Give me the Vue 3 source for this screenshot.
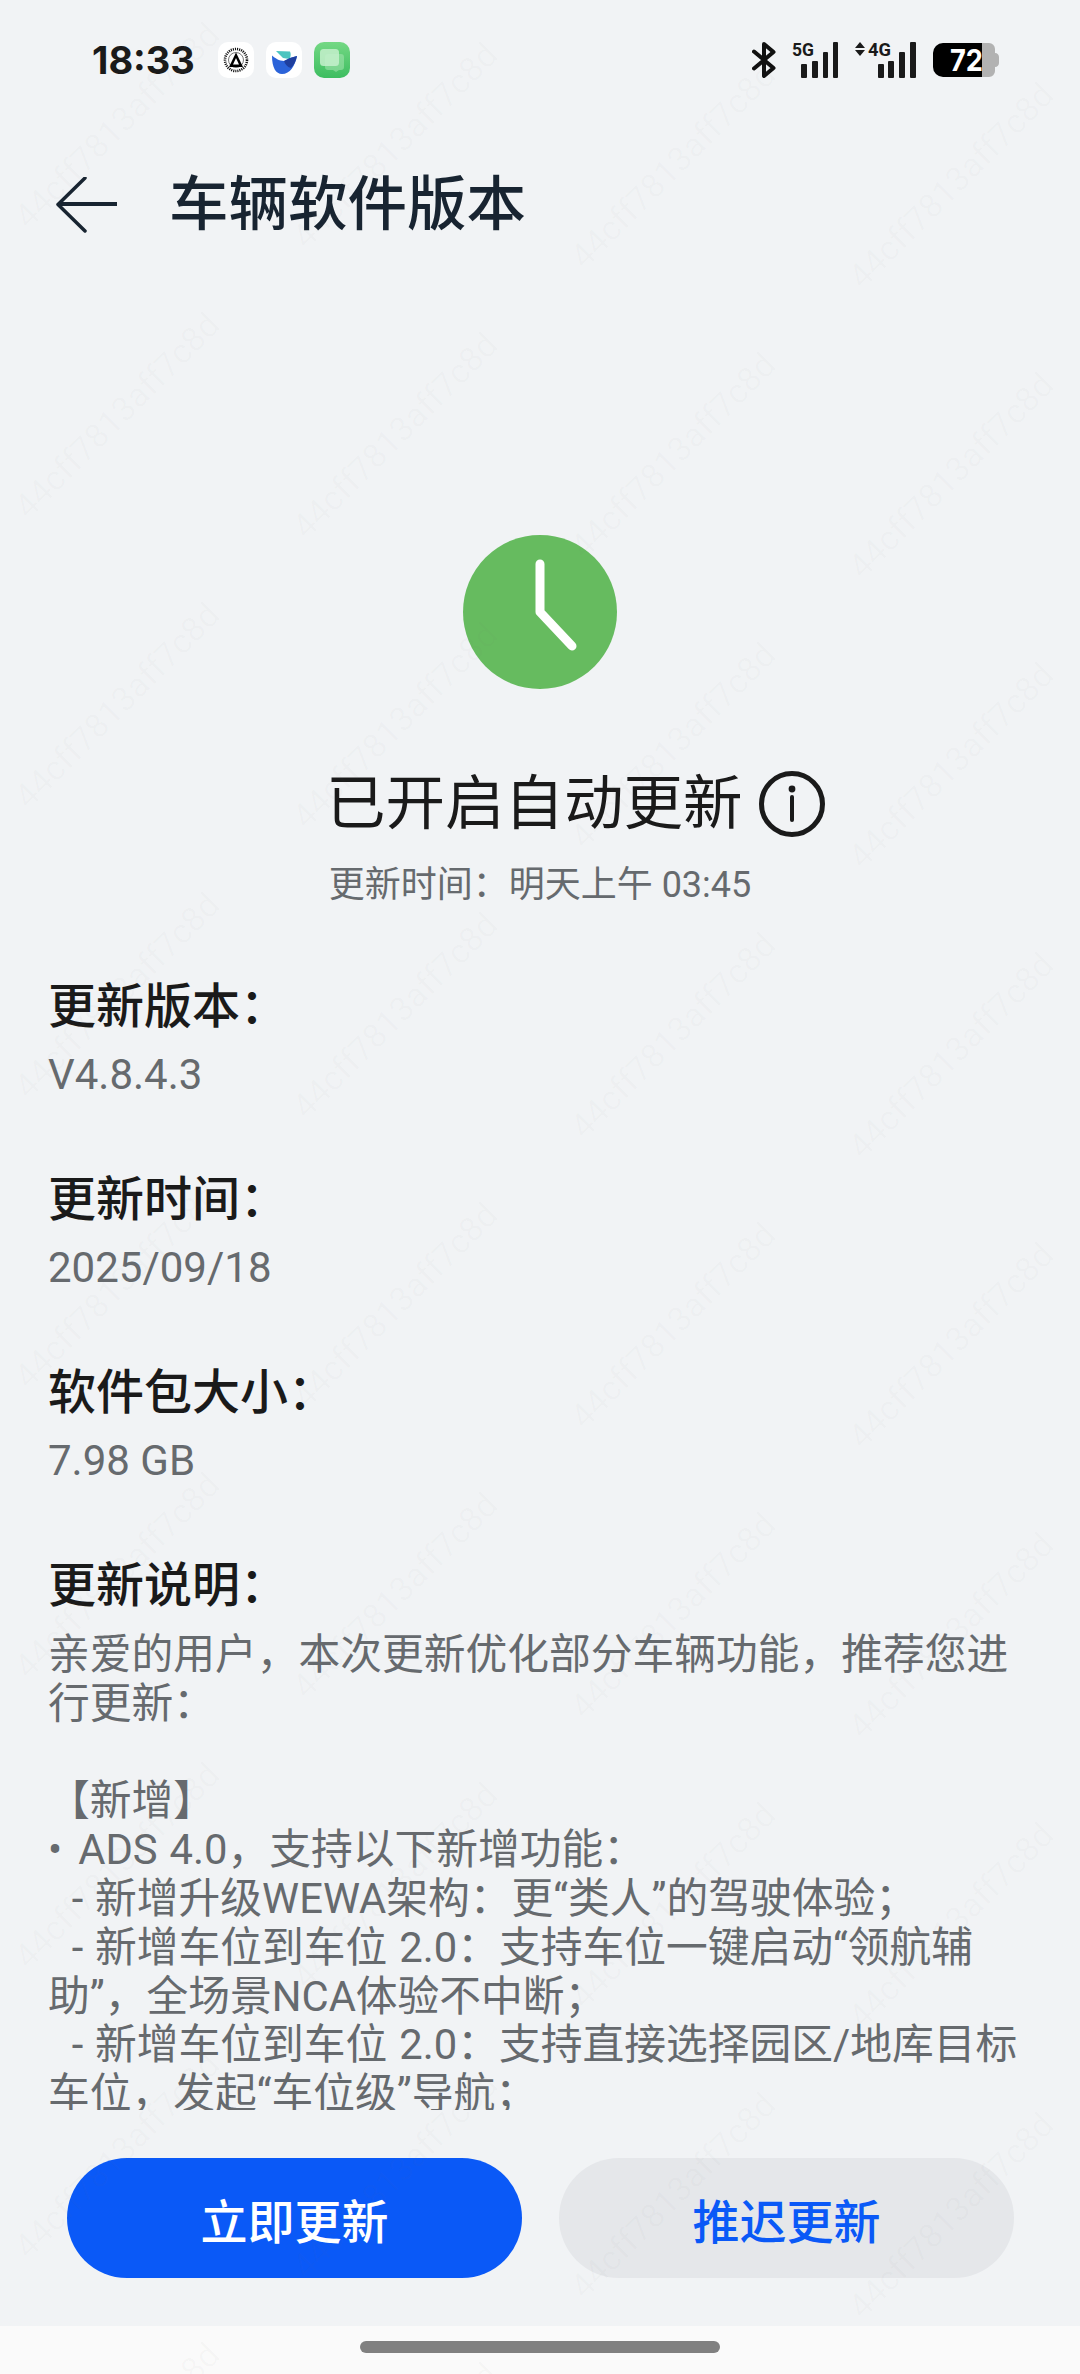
<script setup>
const infos = [
  { label: '更新版本：', value: 'V4.8.4.3' },
  { label: '更新时间：', value: '2025/09/18' },
  { label: '软件包大小：', value: '7.98 GB' },
]
const notes = `亲爱的用户，本次更新优化部分车辆功能，推荐您进行更新：

【新增】
•\u200a ADS 4.0，支持以下新增功能：
  - 新增升级WEWA架构：更“类人”的驾驶体验；
  - 新增车位到车位 2.0：支持车位一键启动“领航辅助”，全场景NCA体验不中断；
  - 新增车位到车位 2.0：支持直接选择园区/地库目标车位，发起“车位级”导航；`
const marks = []
for (let r = -1; r < 8; r++) {
  for (let c = 0; c < 4; c++) {
    marks.push({ left: 20 + 278 * c, top: 495 + 290 * r + 20 * c })
  }
}
</script>

<template>
  <div class="page">
    <div class="status">
      <div class="status-left">
        <span class="time">18:33</span>
        <div class="apps">
          <svg class="app" viewBox="0 0 36 36">
            <rect width="36" height="36" rx="10" fill="#fff" />
            <circle cx="18" cy="18" r="11" fill="none" stroke="#111" stroke-width="2.6" stroke-dasharray="1.1 1" />
            <circle cx="18" cy="18" r="7.5" fill="none" stroke="#555" stroke-width="0.8" />
            <path d="M18 10.5L25 25H11Z" fill="#000" />
            <path d="M18 16L21 22.5H15Z" fill="#fff" />
          </svg>
          <svg class="app" viewBox="0 0 36 36">
            <rect width="36" height="36" rx="10" fill="#fff" />
            <path d="M10 9L24 9.5C25 12 25 14 23.5 17L17 16Z" fill="#4cc4c0" />
            <path d="M6 13.5C9 16 13 19 18 19L24 16L31 14C29 24 24 32 16 32C10 32 6 26 6 13.5Z" fill="#2b63d9" />
            <path d="M18 19L24 16L31 14C30 19 28 23 25 26C21 25 19 22 18 19Z" fill="#1f3f9e" />
          </svg>
          <svg class="app" viewBox="0 0 36 36">
            <defs>
              <linearGradient id="chatGreen" x1="0" y1="0" x2="0" y2="1">
                <stop offset="0" stop-color="#74d884" />
                <stop offset="1" stop-color="#3dbd60" />
              </linearGradient>
            </defs>
            <rect width="36" height="36" rx="10" fill="url(#chatGreen)" />
            <path d="M14 12h13a3 3 0 0 1 3 3v10a3 3 0 0 1-3 3h-2l-3 2-3-2h-5a3 3 0 0 1-3-3V15a3 3 0 0 1 3-3Z" fill="#a7e6b2" opacity=".55" />
            <rect x="6" y="7" width="19" height="17" rx="3.5" fill="#c5f0cc" opacity=".85" />
          </svg>
        </div>
      </div>
      <div class="status-right">
        <svg class="bt" viewBox="0 0 24 36">
          <path d="M2 9.500L21.500 26L12 34V2L21.500 10L2 26.500" fill="none" stroke="#111" stroke-width="4" stroke-linejoin="round" stroke-linecap="round" />
        </svg>
        <svg class="sig5" viewBox="0 0 47 36">
          <text class="net" x="0" y="14" textLength="22" lengthAdjust="spacingAndGlyphs">5G</text>
          <rect x="9" y="22" width="6" height="14" rx="1" fill="#1a1a1a" />
          <rect x="20" y="19" width="6" height="17" rx="1" fill="#1a1a1a" />
          <rect x="31" y="10" width="5" height="26" rx="1" fill="#1a1a1a" />
          <rect x="41" y="0" width="5" height="36" rx="1" fill="#1a1a1a" />
        </svg>
        <svg class="sig4" viewBox="0 0 62 36">
          <path d="M5 0L10 6H0ZM5 14L0 8H10Z" fill="#1a1a1a" />
          <text class="net" x="13" y="14" textLength="23" lengthAdjust="spacingAndGlyphs">4G</text>
          <rect x="23" y="22" width="6" height="14" rx="1" fill="#1a1a1a" />
          <rect x="33" y="19" width="6" height="17" rx="1" fill="#1a1a1a" />
          <rect x="44" y="10" width="6" height="26" rx="1" fill="#1a1a1a" />
          <rect x="55" y="0" width="6" height="36" rx="1" fill="#1a1a1a" />
        </svg>
        <svg class="battery" viewBox="0 0 66 34">
          <path d="M10 0H49V34H10A10 10 0 0 1 0 24V10A10 10 0 0 1 10 0Z" fill="#000" />
          <path d="M49 0H56A6 6 0 0 1 62 6V10C64.500 10 66 12 66 14V20C66 22 64.500 24 62 24V28A6 6 0 0 1 56 34H49Z" fill="#b2b2b2" />
          <text class="batt" x="17" y="28" textLength="33" lengthAdjust="spacingAndGlyphs">72</text>
        </svg>
      </div>
    </div>

    <header class="bar">
      <svg class="back" viewBox="0 0 62 56">
        <path d="M61 27H3" stroke="#182431" stroke-width="4" fill="none" />
        <path d="M29 1L2 27.500L29 54" stroke="#182431" stroke-width="3.500" fill="none" stroke-linecap="round" stroke-linejoin="round" />
      </svg>
      <h1 class="title">车辆软件版本</h1>
    </header>

    <main class="scroll">
      <section class="hero">
        <svg class="clock" viewBox="0 0 154 154">
          <circle cx="77" cy="77" r="77" fill="#66bb5f" />
          <path d="M77 29V77L109 111" fill="none" stroke="#fff" stroke-width="9" stroke-linecap="round" stroke-linejoin="round" />
        </svg>
        <div class="hero-title">
          <span>已开启自动更新</span>
          <svg class="info" viewBox="0 0 66 66">
            <circle cx="33" cy="33" r="30.500" fill="none" stroke="#1a1a1a" stroke-width="5" />
            <circle cx="33" cy="18" r="3.400" fill="#1a1a1a" />
            <path d="M33 26V49" stroke="#1a1a1a" stroke-width="4" stroke-linecap="round" />
          </svg>
        </div>
        <p class="hero-sub">更新时间：明天上午 03:45</p>
      </section>

      <section class="details">
        <div v-for="item in infos" :key="item.label" class="row">
          <h2 class="label">{{ item.label }}</h2>
          <p class="value">{{ item.value }}</p>
        </div>
        <div class="row">
          <h2 class="label">更新说明：</h2>
          <p class="notes">{{ notes }}</p>
        </div>
      </section>
    </main>

    <footer class="actions">
      <button class="btn primary">立即更新</button>
      <button class="btn secondary">推迟更新</button>
    </footer>

    <div class="nav"><span class="pill"></span></div>

    <div class="marks">
      <span v-for="(m, i) in marks" :key="i" class="mark" :style="{ left: m.left + 'px', top: m.top + 'px' }">44cff7813aff7c8d</span>
    </div>
  </div>
</template>

<style>
html, body { margin: 0; padding: 0; background: #f1f3f5; }
</style>

<style scoped>
.page {
  position: relative;
  width: 1080px;
  height: 2374px;
  display: flex;
  flex-direction: column;
  overflow: hidden;
  background: #f1f3f5;
  font-family: Roboto, "Noto Sans CJK SC", sans-serif;
}
.status {
  flex: none;
  height: 120px;
  padding: 0 81px 0 92px;
  box-sizing: border-box;
  display: flex;
  align-items: center;
  justify-content: space-between;
}
.status-left { display: flex; align-items: center; }
.time { width: 126px; font-family: Inter, sans-serif; font-size: 38px; font-weight: 700; color: #1a1a1a; line-height: 44px; }
.apps { display: flex; gap: 12px; }
.app { width: 36px; height: 36px; display: block; }
.status-right { display: flex; align-items: center; gap: 16px; }
.bt { width: 24px; height: 36px; }
.sig5 { width: 47px; height: 36px; overflow: visible; }
.sig4 { width: 62px; height: 36px; overflow: visible; }
.battery { width: 66px; height: 34px; overflow: visible; }
.net { font-family: Roboto, sans-serif; font-size: 19px; font-weight: 700; fill: #1a1a1a; }
.batt { font-family: Inter, sans-serif; font-size: 30px; font-weight: 700; fill: #fff; }
.bar {
  flex: none;
  height: 168px;
  padding: 2px 0 0 56px;
  box-sizing: border-box;
  display: flex;
  align-items: center;
}
.back { width: 62px; height: 56px; flex: none; }
.title {
  margin: 0 0 0 51px;
  font-size: 59.5px;
  line-height: 72px;
  font-weight: 500;
  color: #182431;
}
.scroll { flex: 1; min-height: 0; overflow: hidden; }
.hero { display: flex; flex-direction: column; align-items: center; padding-top: 247px; }
.clock { width: 154px; height: 154px; display: block; }
.hero-title {
  align-self: flex-start;
  margin: 79px 0 0 326px;
  display: flex;
  align-items: center;
  gap: 16px;
  font-size: 59.5px;
  line-height: 72px;
  color: #1a1a1a;
}
.info { width: 66px; height: 66px; flex: none; }
.hero-sub { margin: 20px 0 0; font-size: 36px; line-height: 50px; color: #666a6e; }
.details {
  margin-top: 65px;
  padding: 0 48px;
  display: flex;
  flex-direction: column;
  gap: 65px;
}
.row { display: flex; flex-direction: column; }
.label { margin: 0; font-size: 48px; line-height: 64px; font-weight: 500; color: #1a1a1a; }
.value { margin: 8px 0 0; font-size: 42px; line-height: 56px; color: #666a6e; }
.notes {
  margin: 13px 0 0;
  font-size: 41.75px;
  line-height: 48.8px;
  color: #666a6e;
  white-space: pre-wrap;
  word-spacing: 1.5px;
}
.actions {
  flex: none;
  height: 216px;
  padding: 48px 66px 0 67px;
  box-sizing: border-box;
  display: flex;
  gap: 37px;
}
.btn {
  flex: 1;
  height: 120px;
  border: 0;
  border-radius: 60px;
  font-family: inherit;
  font-size: 47px;
  font-weight: 500;
}
.primary { background: #0a59f7; color: #fff; }
.secondary { background: #e5e7ea; color: #0a59f7; }
.nav {
  flex: none;
  height: 48px;
  background: #fafafa;
  display: flex;
  justify-content: center;
  padding-top: 15px;
  box-sizing: border-box;
}
.pill { width: 360px; height: 12px; border-radius: 6px; background: #808080; }
.marks { position: absolute; inset: 0; pointer-events: none; }
.mark {
  position: absolute;
  font-size: 34px;
  line-height: 1;
  white-space: nowrap;
  color: rgba(120, 120, 120, 0.03);
  transform: rotate(-45deg);
  transform-origin: 0 50%;
}
</style>
